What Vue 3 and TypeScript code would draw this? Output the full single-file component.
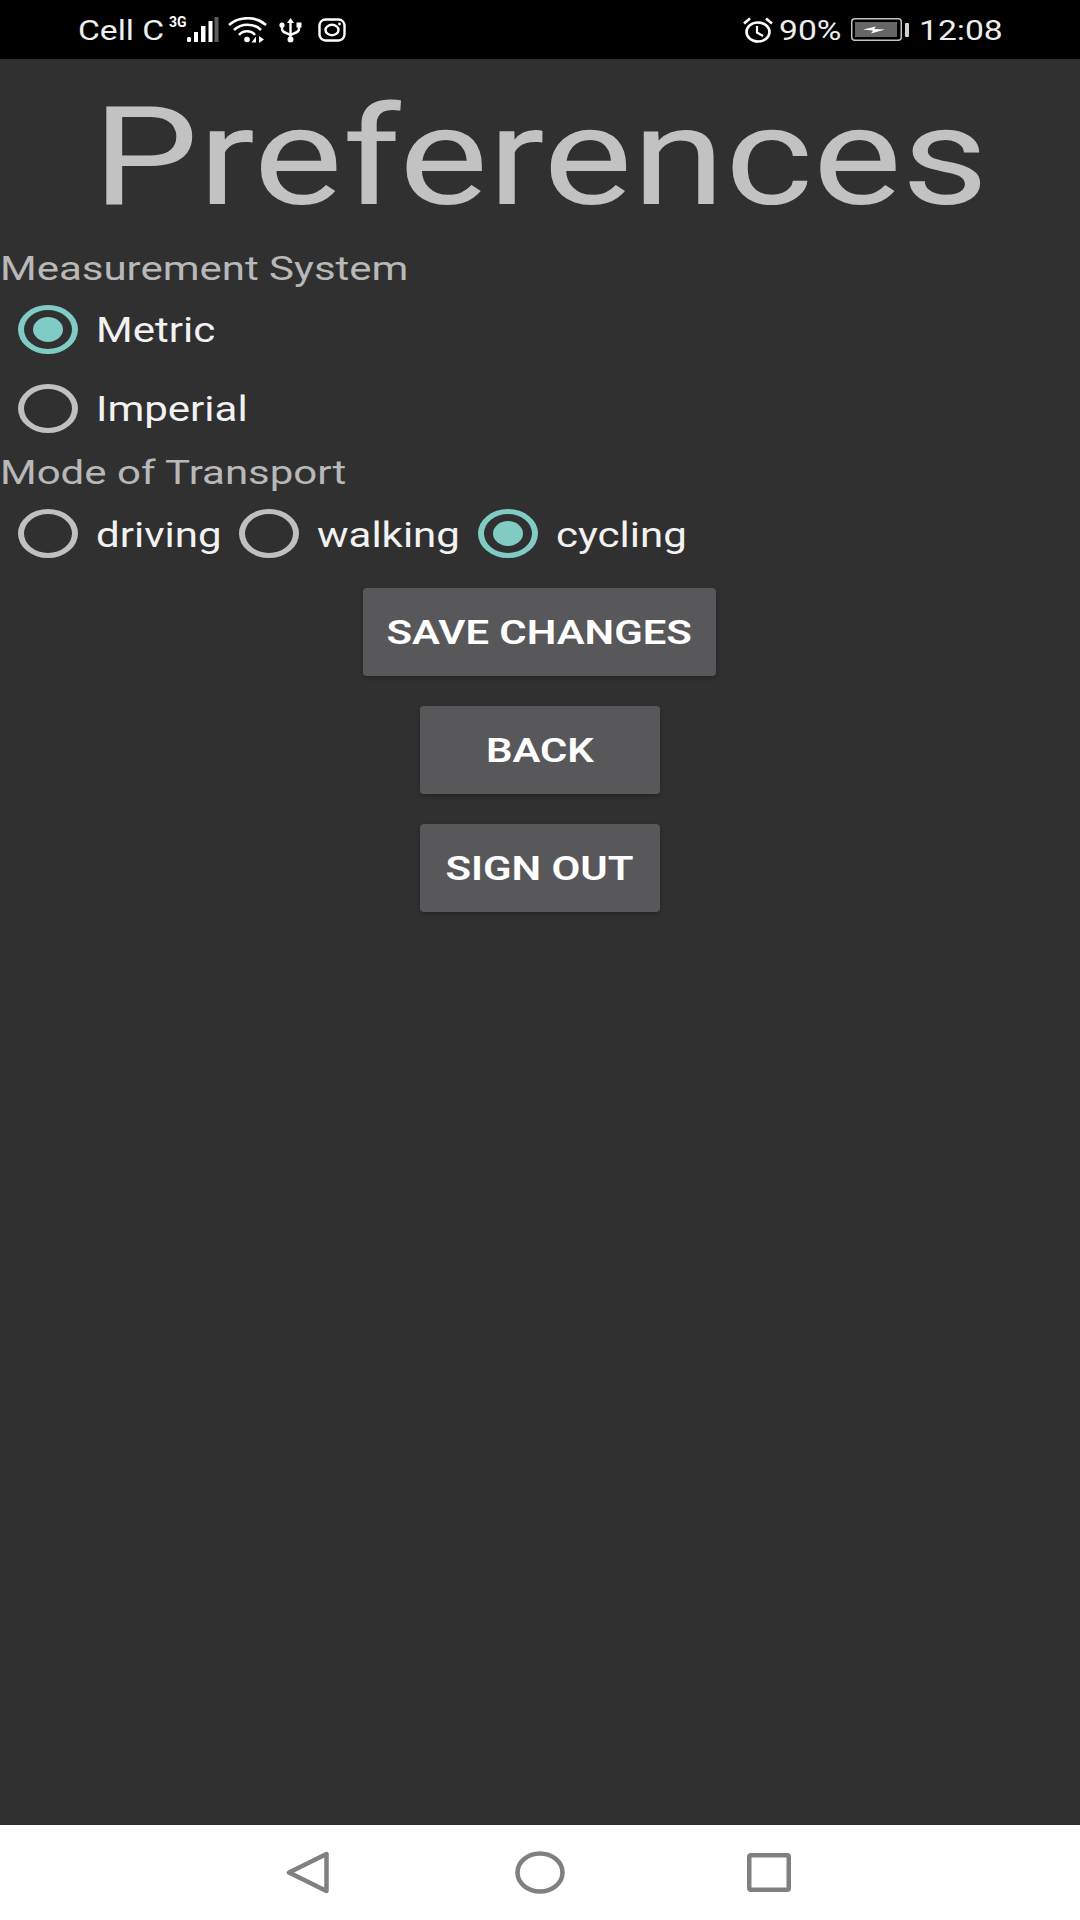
<script setup lang="ts">
import { ref } from 'vue';

const units = ref('Metric');
const transport = ref('cycling');
const unitOptions = ['Metric', 'Imperial'];
const transportOptions = ['driving', 'walking', 'cycling'];
const buttons = ['SAVE CHANGES', 'BACK', 'SIGN OUT'];
</script>

<template>
  <div class="screen">
    <header class="status-bar">
      <div class="status-left">
        <span class="status-text carrier">Cell C</span>
        <span class="net-type">3G</span>
        <svg class="signal" width="33" height="26" viewBox="0 0 33 26">
          <rect x="1" y="20" width="4" height="5" rx="1.500" fill="#fff" />
          <rect x="8" y="15" width="4" height="10" fill="#fff" />
          <rect x="15" y="9" width="4.500" height="16" fill="#fff" />
          <rect x="22.500" y="4" width="4" height="21" fill="#fff" />
          <rect x="28.500" y="0" width="4" height="25" fill="#5c5c5c" />
        </svg>
        <svg class="wifi" width="39" height="26" viewBox="0 0 39 26" fill="none" stroke="#fff" stroke-width="2.600">
          <path d="M1 8C11 -1 28 -1 38 8" />
          <path d="M6 13C13 6 26 6 33 13" />
          <path d="M11 18C15 13 23 13 27 18" />
          <circle cx="19" cy="22.500" r="2.800" fill="#fff" stroke="none" />
          <path d="M28 19.500v6h-4.500zM31 19v7l5-3.500z" fill="#fff" stroke="none" />
        </svg>
        <svg class="usb" width="23" height="26" viewBox="0 0 23 26" fill="none" stroke="#fff" stroke-width="2.400">
          <path d="M11.500 3V23" />
          <path d="M8 6l3.500-5 3.500 5z" fill="#fff" stroke="none" />
          <path d="M3 9v3c0 3 3 3.500 8.500 6 5.500-2.500 8.500-3 8.500-6V9" />
          <circle cx="3" cy="8" r="2.600" fill="#fff" stroke="none" />
          <rect x="17.500" y="5.500" width="5" height="5" fill="#fff" stroke="none" />
          <circle cx="11.500" cy="22.500" r="3" fill="#fff" stroke="none" />
        </svg>
        <svg class="insta" width="28" height="24" viewBox="0 0 28 24" fill="none" stroke="#fff" stroke-width="2.400">
          <rect x="1.500" y="1.500" width="25" height="21" rx="6" />
          <ellipse cx="14" cy="12" rx="6.500" ry="5.200" />
          <circle cx="21.500" cy="6" r="1.400" fill="#fff" stroke="none" />
        </svg>
      </div>
      <div class="status-right">
        <svg class="alarm" width="30" height="26" viewBox="0 0 30 26" fill="none" stroke="#fff" stroke-width="2.600">
          <ellipse cx="15" cy="15" rx="11.500" ry="9.500" />
          <path d="M14 9v6.500l6 3.500" stroke-width="2.200" />
          <path d="M1 6.500L7 1.500M29 6.500L23 1.500" />
        </svg>
        <span class="status-text percent">90%</span>
        <svg class="battery" width="58" height="24" viewBox="0 0 58 24">
          <rect x="0.750" y="0.750" width="49.500" height="21.500" rx="3" fill="none" stroke="#c4c4c4" stroke-width="1.500" />
          <rect x="4" y="4" width="42" height="15" fill="#666" />
          <path d="M12 11.500l13-3-2 2.500 11 .5-14 4 2-3z" fill="#fff" />
          <rect x="54" y="5" width="4" height="14" rx="1" fill="#d0d0d0" />
        </svg>
        <span class="status-text clock">12:08</span>
      </div>
    </header>

    <main class="content">
      <h1 class="title"><span>Preferences</span></h1>

      <p class="group-label"><span>Measurement System</span></p>
      <div class="unit-group">
        <label v-for="opt in unitOptions" :key="opt" class="radio" @click="units = opt">
          <span class="circle" :class="{ checked: units === opt }"></span>
          <span class="radio-text">{{ opt }}</span>
        </label>
      </div>

      <p class="group-label transport-label"><span>Mode of Transport</span></p>
      <div class="transport-group">
        <label v-for="opt in transportOptions" :key="opt" class="radio" @click="transport = opt">
          <span class="circle" :class="{ checked: transport === opt }"></span>
          <span class="radio-text">{{ opt }}</span>
        </label>
      </div>

      <div class="actions">
        <button v-for="b in buttons" :key="b" class="btn" :class="{ wide: b === 'SAVE CHANGES' }">
          <span>{{ b }}</span>
        </button>
      </div>
    </main>

    <nav class="nav-bar">
      <svg width="44" height="43" viewBox="0 0 44 43" fill="none" stroke="#808080" stroke-width="4.500" stroke-linejoin="round">
        <path d="M3 21.500L40.500 3V40Z" />
      </svg>
      <svg class="nav-home" width="50" height="43" viewBox="0 0 50 43" fill="none" stroke="#808080" stroke-width="4.500">
        <ellipse cx="25" cy="21.500" rx="22.500" ry="19" />
      </svg>
      <svg class="nav-recent" width="44" height="39" viewBox="0 0 44 39" fill="none" stroke="#808080" stroke-width="4.500" stroke-linejoin="round">
        <rect x="2.250" y="2.250" width="39.500" height="34.500" rx="1.500" />
      </svg>
    </nav>
  </div>
</template>

<style>
html, body { margin: 0; background: #303030; }
</style>

<style scoped>
* { box-sizing: border-box; }

.screen {
  width: 1080px; height: 1920px;
  display: flex; flex-direction: column;
  background: #303030;
  font-family: Roboto, "Liberation Sans", sans-serif;
  overflow: hidden;
}

.status-bar {
  height: 59px; flex-shrink: 0;
  background: #000; color: #fff;
  display: flex; justify-content: space-between; align-items: center;
  padding: 0 93px 0 78px;
}
.status-left, .status-right { display: flex; align-items: center; }
.status-text {
  font-size: 28px; color: #eee; padding-top: 2px;
  display: inline-block; transform: scaleX(1.2); transform-origin: left;
}
.carrier { width: 91px; }
.net-type { width: 17px; font-size: 14px; font-weight: 700; color: #fff; margin-top: -16px; }
.wifi { margin-left: 9px; }
.usb { margin-left: 12px; }
.insta { margin-left: 16px; }
.percent { width: 72px; margin-left: 6px; }
.clock { width: 68px; margin-left: 10px; }

.content { flex: 1; display: flex; flex-direction: column; }

.title {
  margin: 18px 0 9px; height: 160px;
  display: flex; justify-content: center; align-items: center;
  font-size: 138px; font-weight: 400; color: #c2c2c2;
}
.title span { display: inline-block; transform: scaleX(1.216); }

.group-label {
  margin: 0; height: 44px; line-height: 44px;
  font-size: 34px; color: #b8b8b8;
}
.group-label span { display: inline-block; transform: scaleX(1.235); transform-origin: left; }
.transport-label { margin-top: 2px; }

.unit-group { display: flex; flex-direction: column; }
.unit-group .radio { height: 79px; }
.transport-group {
  display: grid; grid-template-columns: 221px 239px auto;
  height: 79px;
}
.transport-group .radio-text { padding-top: 4px; }

.radio { display: flex; align-items: center; padding-left: 18px; }
.circle {
  width: 60px; height: 49px;
  border: solid #c0c0c0; border-width: 5px 6px; border-radius: 50%;
  flex-shrink: 0; position: relative;
}
.circle.checked { border-color: #80cbc4; }
.circle.checked::after {
  content: ''; position: absolute; inset: 7px 9px;
  border-radius: 50%; background: #80cbc4;
}
.radio-text {
  margin-left: 18px; padding-top: 2px;
  font-size: 35px; color: #f2f2f2;
  display: inline-block; transform: scaleX(1.2); transform-origin: left;
}

.actions {
  display: flex; flex-direction: column; align-items: center; gap: 30px;
  margin: 15px 1px 0 0;
}
.btn {
  width: 240px; height: 88px;
  border: none; border-radius: 4px;
  background: #58585a; color: #fff;
  box-shadow: 0 2px 5px rgba(0, 0, 0, 0.25);
  font-family: Roboto, "Liberation Sans", sans-serif;
  font-size: 34px; font-weight: 600;
  padding: 0;
}
.btn span { display: inline-block; transform: scaleX(1.23); white-space: nowrap; }
.btn.wide { width: 353px; }

.nav-bar {
  height: 95px; flex-shrink: 0;
  background: #fff;
  display: flex; align-items: center;
  padding-left: 286px;
}
.nav-home { margin-left: 185px; }
.nav-recent { margin-left: 182px; }
</style>
